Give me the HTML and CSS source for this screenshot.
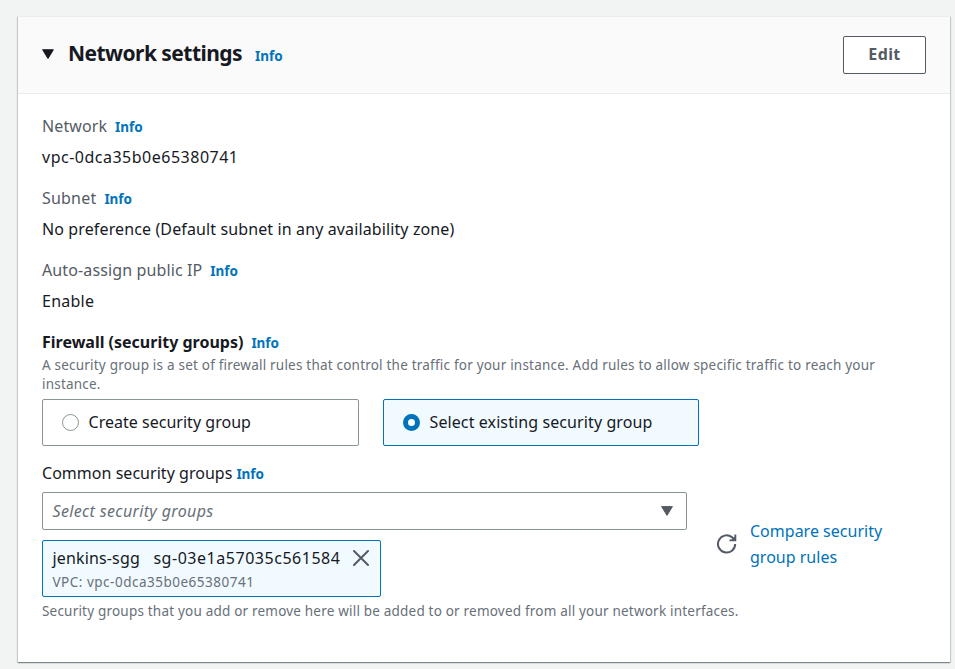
FILE: index.html
```
<!DOCTYPE html>
<html lang="en">
<head>
<meta charset="utf-8">
<title>Network settings</title>
<link rel="stylesheet" href="styles.css">
</head>
<body>
<section class="panel">
  <header class="panel-header">
    <svg class="caret" width="12" height="10" viewBox="0 0 12 10"><path d="M.8.8h10.4L6 9.2z" fill="#16191f" stroke="#16191f" stroke-width="1.2" stroke-linejoin="round"/></svg>
    <h2 class="title">Network settings</h2>
    <a class="info title-info">Info</a>
    <button class="edit" type="button">Edit</button>
  </header>
  <div class="panel-body">
    <div class="field">
      <div class="label"><span class="t-network">Network</span><a class="info">Info</a></div>
      <div class="value t-id">vpc-0dca35b0e65380741</div>
    </div>
    <div class="field">
      <div class="label"><span class="t-subnet">Subnet</span><a class="info">Info</a></div>
      <div class="value">No preference (Default subnet in any availability zone)</div>
    </div>
    <div class="field">
      <div class="label"><span class="t-ip">Auto-assign public IP</span><a class="info">Info</a></div>
      <div class="value t-enable">Enable</div>
    </div>
    <div class="label strong"><span>Firewall (security groups)</span><a class="info">Info</a></div>
    <p class="hint firewall-hint">A security group is a set of firewall rules that control the traffic for your instance. Add rules to allow specific traffic to reach your instance.</p>
    <div class="tiles">
      <div class="tile"><span class="radio"></span><span class="tile-label t-create">Create security group</span></div>
      <div class="tile selected"><span class="radio"></span><span class="tile-label t-existing">Select existing security group</span></div>
    </div>
    <div class="label dark"><span class="t-common">Common security groups</span><a class="info">Info</a></div>
    <div class="groups-row">
      <div class="groups">
        <div class="select"><span>Select security groups</span>
          <svg width="12" height="10" viewBox="0 0 12 10"><path d="M.6.6h10.8L6 9.4z" fill="#545b64" stroke="#545b64" stroke-width="1" stroke-linejoin="round"/></svg>
        </div>
        <div class="token">
          <div class="token-main"><span class="token-name">jenkins-sgg</span><span class="t-sg">sg-03e1a57035c561584</span>
            <svg width="16" height="16" viewBox="0 0 16 16"><path d="M1 1l14 14M15 1L1 15" fill="none" stroke="#545b64" stroke-width="2" stroke-linecap="round"/></svg>
          </div>
          <div class="token-vpc">VPC: vpc-0dca35b0e65380741</div>
        </div>
      </div>
      <svg class="refresh" width="20" height="20" viewBox="0 0 20 20"><path d="M18.2 10A8.6 8.6 0 1 1 14.8 3.1L17 5" fill="none" stroke="#545b64" stroke-width="2"/><path d="M17.4.4h1.9v6.8h-6.8V5.4l2.6-.2 2.3-2.3z" fill="#545b64"/></svg>
      <a class="compare">Compare security<br>group rules</a>
    </div>
    <p class="hint">Security groups that you add or remove here will be added to or removed from all your network interfaces.</p>
  </div>
</section>
</body>
</html>
```
FILE: styles.css
```
* { box-sizing: border-box; }

body {
  margin: 0;
  padding: 16px 5px 0 18px;
  height: 669px;
  overflow: hidden;
  background: #f2f3f3;
  color: #16191f;
  font: 16px/26px "Noto Sans", "Open Sans", sans-serif;
}

.panel {
  height: 646px;
  background: #fff;
  border-top: 1px solid #eaeded;
  box-shadow: 0 1px 1px 0 rgba(0, 28, 36, .3), 1px 1px 1px 0 rgba(0, 28, 36, .15), -1px 1px 1px 0 rgba(0, 28, 36, .15);
}

.panel-header {
  display: flex;
  align-items: center;
  height: 77px;
  padding: 0 24px;
  background: #fafafa;
  border-bottom: 1px solid #eaeded;
}

.caret { margin: 0 14px 3px 0; }

.title {
  margin: 0 13px 5px 0;
  font-size: 21px;
  line-height: 30px;
  letter-spacing: -.54px;
}

.info {
  color: #0073bb;
  font-size: 13.5px;
  font-weight: 700;
  letter-spacing: -.05px;
}

.title-info { margin-top: 2px; }

.edit {
  width: 83px;
  height: 38px;
  margin-left: auto;
  padding: 0 0 2px;
  background: #fff;
  border: 1px solid #545b64;
  border-radius: 2px;
  color: #545b64;
  font: 700 16px/26px "Noto Sans", sans-serif;
  letter-spacing: .4px;
}

.panel-body { padding: 19px 24px 0; }

.field { margin-bottom: 15px; }

.label {
  display: flex;
  align-items: baseline;
  gap: 8px;
  height: 26px;
  color: #545b64;
}

.field .label { margin-bottom: 5px; }
.strong, .dark { color: #16191f; }
.strong > span { font-weight: 700; }
.dark { gap: 4px; margin-bottom: 6px; }

.value { letter-spacing: .12px; }
.t-network { letter-spacing: .1px; }
.t-subnet { letter-spacing: .2px; }
.t-ip { letter-spacing: .12px; }
.value.t-id { letter-spacing: .5px; }
.value.t-enable { letter-spacing: .25px; }
.t-common { letter-spacing: .03px; }
.t-create { letter-spacing: .02px; }
.t-existing { letter-spacing: .1px; }

.hint {
  margin: 0;
  color: #687078;
  font-size: 13.5px;
  line-height: 19px;
  letter-spacing: .2px;
}

.firewall-hint { width: 850px; margin-top: 1px; letter-spacing: .21px; }

.tiles {
  display: flex;
  gap: 24px;
  margin: 5px 0 14px;
}

.tile {
  display: flex;
  align-items: center;
  gap: 9.5px;
  width: 317px;
  height: 47px;
  padding: 0 19px;
  border: 1px solid #879596;
  border-radius: 2px;
}

.tile-label { margin-bottom: 2px; }

.tile.selected {
  width: 316px;
  background: #f1faff;
  border-color: #0073bb;
}

.radio {
  width: 17px;
  height: 17px;
  border: 1px solid #879596;
  border-radius: 50%;
  background: #fff;
}

.selected .radio { border: 5px solid #0073bb; }

.groups-row {
  display: flex;
  align-items: center;
  margin-bottom: 5px;
}

.groups { width: 645px; }

.select {
  display: flex;
  align-items: center;
  justify-content: space-between;
  height: 38px;
  padding: 0 13.5px 0 9.5px;
  border: 1px solid #879596;
  border-radius: 2px;
  color: #687078;
  font-style: italic;
  letter-spacing: .34px;
}

.token {
  width: 339px;
  height: 57px;
  margin-top: 10px;
  padding: 4px 9px 0 9.5px;
  background: #f1faff;
  border: 1px solid #0073bb;
  border-radius: 2px;
  white-space: nowrap;
}

.token-main { display: flex; align-items: center; }
.token-name { margin-right: 13.5px; letter-spacing: .15px; }
.t-sg { letter-spacing: .53px; }
.token-main svg { flex: none; margin-left: auto; margin-right: 2px; }

.token-vpc {
  margin-top: 2px;
  color: #687078;
  font-size: 13.5px;
  line-height: 19px;
  letter-spacing: .5px;
}

.refresh { margin: 0 0 1px 30px; }

.compare {
  margin: 0 0 2px 13px;
  color: #0073bb;
  letter-spacing: .01px;
}
```
